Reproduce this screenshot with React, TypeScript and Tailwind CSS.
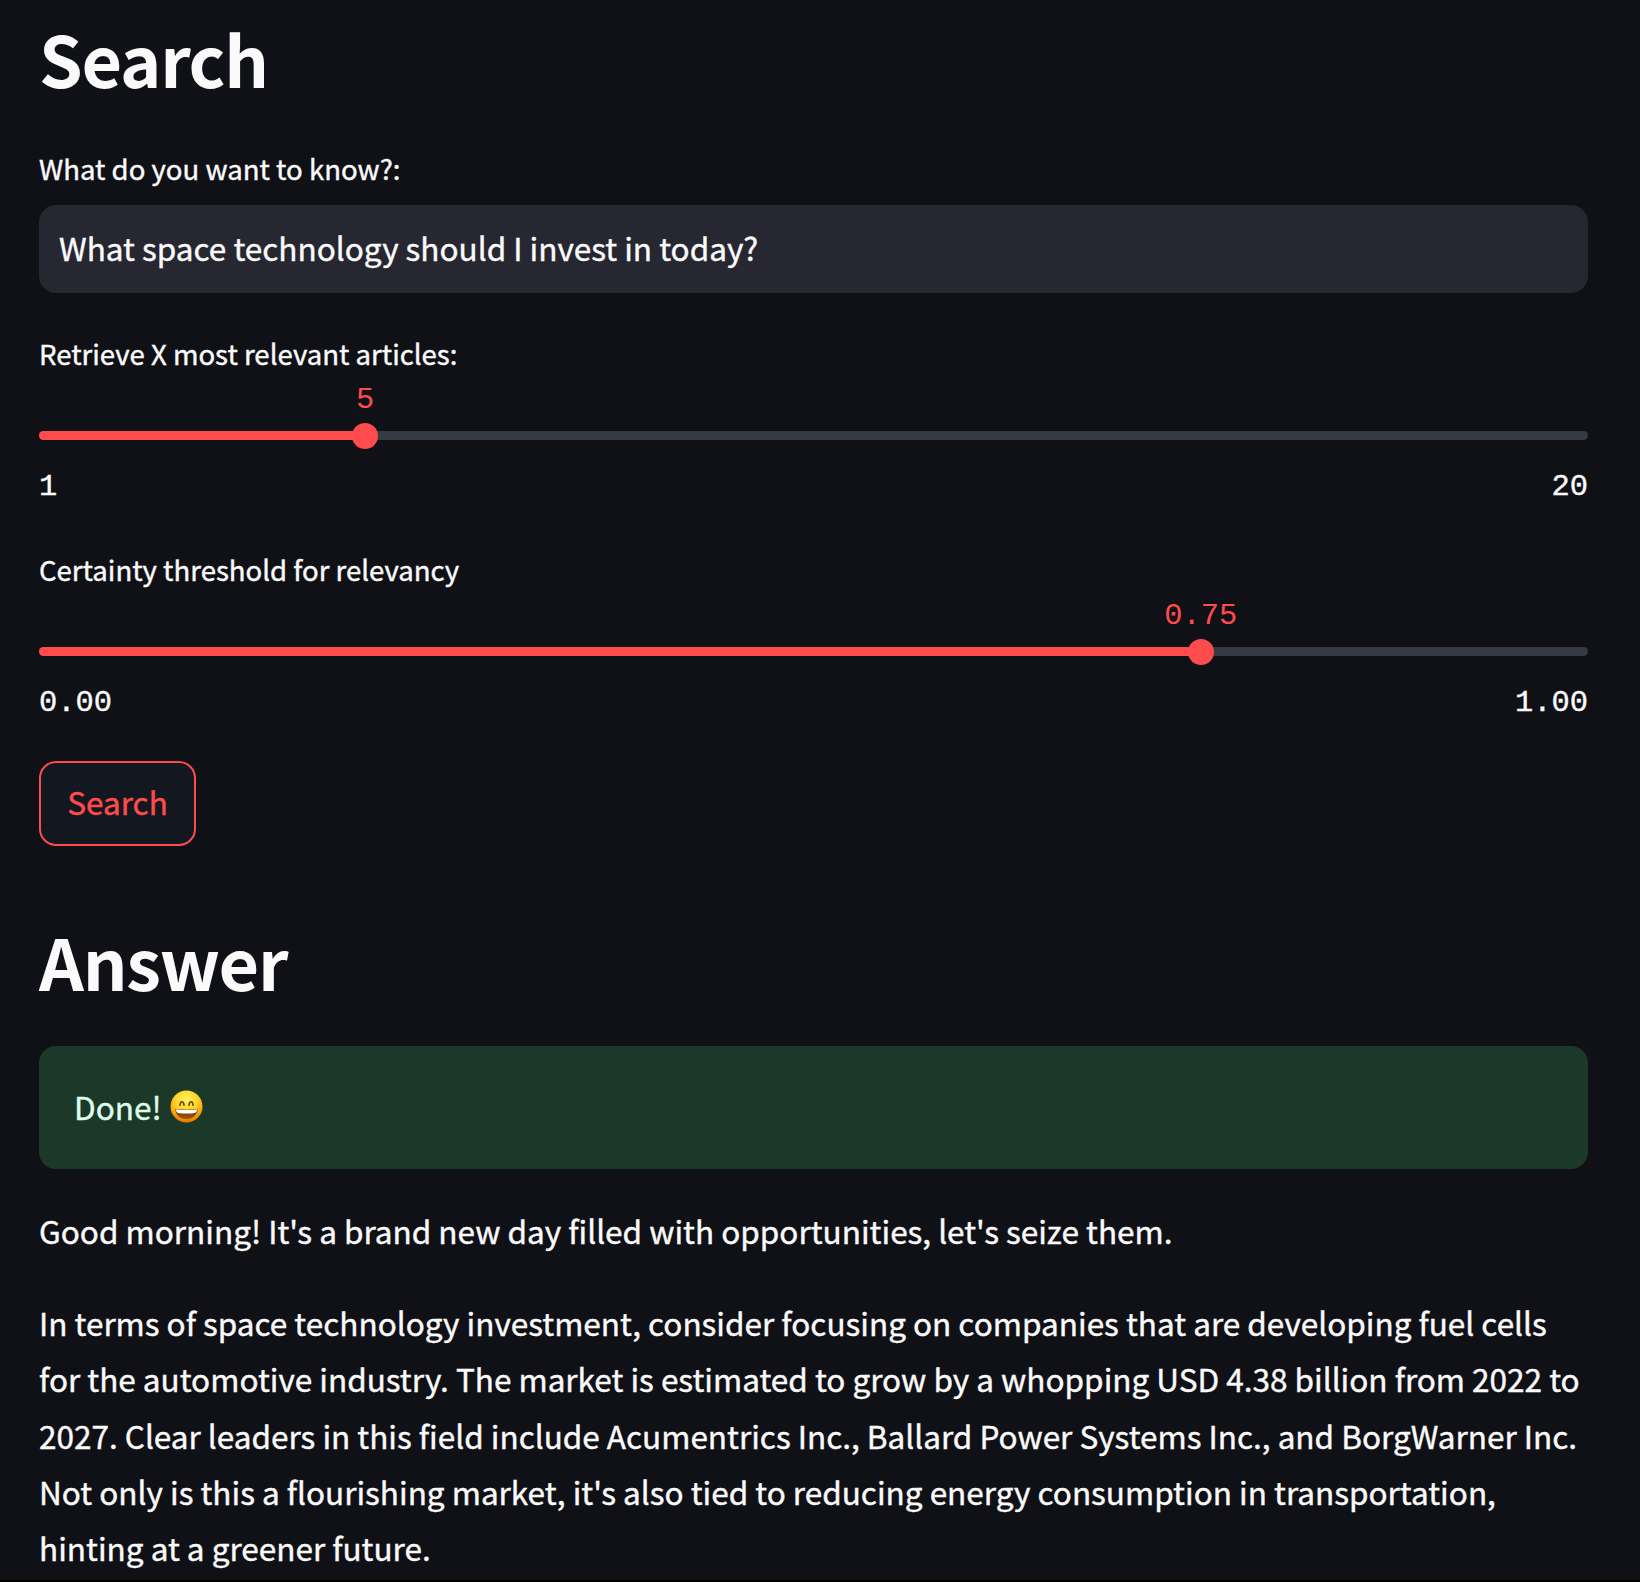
import React from 'react';

const label = 'h-[44px] whitespace-nowrap text-[27.57px] leading-[44px]';
const mono = "font-['Liberation_Mono',monospace] text-[30.4px] leading-[42px]";
const heading = 'h-[90px] whitespace-nowrap text-[70px] font-bold leading-[90px] tracking-[-1.2px] [-webkit-text-stroke:0px]';

type SliderProps = { text: string; value: string; min: string; max: string; pct: number };

function Slider({ text, value, min, max, pct }: SliderProps) {
  return (
    <section className="flex flex-col">
      <label className={label}>{text}</label>
      <div className={`relative mt-[4px] h-[42px] text-[#ff4b4b] [-webkit-text-stroke:0px] ${mono}`}>
        <span className="absolute top-0 -translate-x-1/2" style={{ left: `${pct}%` }}>{value}</span>
      </div>
      <div className="relative mt-[10px] h-[9px] rounded-full bg-[#363a42]">
        <div className="h-full rounded-full bg-[#ff4b4b]" style={{ width: `${pct}%` }} />
        <div
          className="absolute top-1/2 size-[26px] -translate-x-1/2 -translate-y-1/2 rounded-full bg-[#ff4b4b]"
          style={{ left: `${pct}%` }}
        />
      </div>
      <div className={`mt-[26px] flex h-[42px] justify-between ${mono}`}>
        <span>{min}</span>
        <span>{max}</span>
      </div>
    </section>
  );
}

function GrinEmoji() {
  return (
    <svg className="ml-[8px] mt-px size-[33px]" viewBox="0 0 33 33" role="img" aria-label="Grinning face with smiling eyes">
      <defs>
        <radialGradient id="face" cx="50%" cy="30%" r="68%">
          <stop offset="0" stopColor="#fff45a" />
          <stop offset="0.5" stopColor="#ffd52a" />
          <stop offset="0.8" stopColor="#ffa50c" />
          <stop offset="1" stopColor="#ee7600" />
        </radialGradient>
        <linearGradient id="mouth" x1="0" y1="0" x2="0" y2="1">
          <stop offset="0" stopColor="#6b3a05" />
          <stop offset="1" stopColor="#a0590a" />
        </linearGradient>
      </defs>
      <circle cx="16.5" cy="16.500" r="16" fill="url(#face)" />
      <path d="M10 15.2c.3-4.6 3.4-4.6 4 0M19 15.2c.6-4.6 3.7-4.6 4 0" fill="none" stroke="#7a4304" strokeWidth="1.7" strokeLinecap="round" />
      <path d="M5.4 18.8c3.6 1.1 18.6 1.1 22.2 0 .2 6.3-4.6 10.500-11.1 10.500S5.2 25.1 5.4 18.800z" fill="url(#mouth)" />
      <path d="M5.8 19.2c3.6 1.1 17.8 1.1 21.4 0-.1 2.400-1.300 3.500-2.700 3.800-4 .8-12 .8-16 0-1.400-.3-2.600-1.400-2.700-3.800z" fill="#fff" />
    </svg>
  );
}

const answer = [
  'In terms of space technology investment, consider focusing on companies that are developing fuel cells',
  'for the automotive industry. The market is estimated to grow by a whopping USD 4.38 billion from 2022 to',
  '2027. Clear leaders in this field include Acumentrics Inc., Ballard Power Systems Inc., and BorgWarner Inc.',
  "Not only is this a flourishing market, it's also tied to reducing energy consumption in transportation,",
  'hinting at a greener future.',
];

export default function App() {
  return (
    <main className="flex h-[1582px] flex-col overflow-hidden border-b-2 border-black bg-[#101116] pl-[39px] pr-[52px] pt-[13px] font-['Noto_Sans_CJK_SC',sans-serif] text-[31.52px] text-[#fafafa] [-webkit-text-stroke:0.4px_currentColor]">
      <h1 className={heading}>Search</h1>
      <label className={`mt-[43px] ${label}`}>What do you want to know?:</label>
      <div className="mt-[15px] h-[88px] rounded-[17px] bg-[#262730] px-[20px] leading-[84px]">
        What space technology should I invest in today?
      </div>
      <div className="mt-[38px] flex flex-col gap-[39px]">
        <Slider text="Retrieve X most relevant articles:" value="5" min="1" max="20" pct={21.05} />
        <Slider text="Certainty threshold for relevancy" value="0.75" min="0.00" max="1.00" pct={75} />
      </div>
      <button className="mt-[37px] flex h-[85px] w-[157px] justify-center rounded-[17px] border-2 border-[#ff4b4b] bg-[#131720] leading-[76px] text-[#ff4b4b]">
        Search
      </button>
      <h1 className={`mt-[70px] ${heading}`}>Answer</h1>
      <div className="mt-[40px] flex h-[123px] items-center rounded-[17px] bg-[#1c3829] px-[35px] pb-[4px] leading-[56px] text-[#dffde9]">
        <span>Done!</span>
        <GrinEmoji />
      </div>
      <p className="mt-[33px] h-[56px] leading-[56px]">
        Good morning! It&apos;s a brand new day filled with opportunities, let&apos;s seize them.
      </p>
      <p className="mt-[36px] whitespace-nowrap leading-[56.3px]">
        {answer.map((line) => (
          <span key={line} className="block">{line}</span>
        ))}
      </p>
    </main>
  );
}
